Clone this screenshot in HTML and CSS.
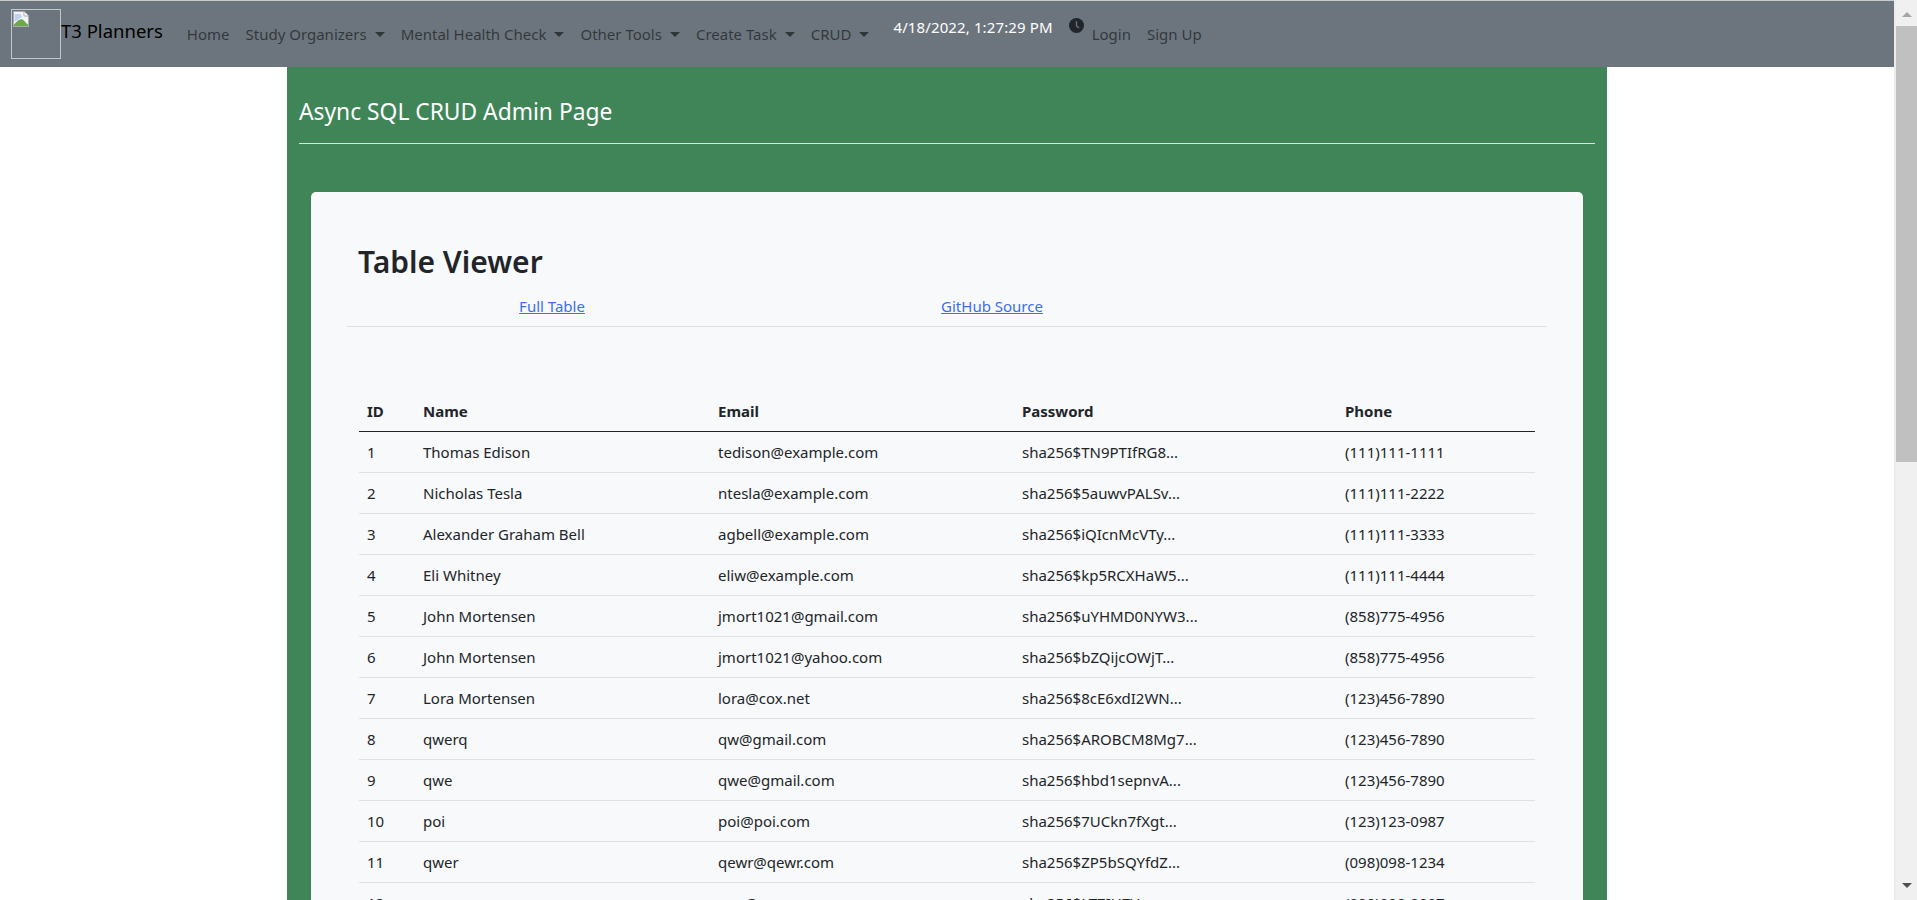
FILE: index.html
```html
<!DOCTYPE html>
<html lang="en">
<head>
<meta charset="utf-8">
<title>Async SQL CRUD Admin Page</title>
<link rel="stylesheet" href="styles.css">
</head>
<body>
<nav class="navbar">
  <a class="brand" href="#">
    <span class="broken-img">
      <svg width="16" height="16" viewBox="0 0 16 16"><path d="M0.5 0.5H11L15.5 5V15.5H0.5Z" fill="#f1f4f9" stroke="#a9adb0"/><path d="M11 0.5V5H15.5" fill="#fff" stroke="#a9adb0"/><path d="M1.5 3H7.5L9 6L6 8L1.5 11Z" fill="#bdd2f0"/><path d="M1 15V13.5C4 10 7 7.5 9.5 8.5C11.5 9.5 12.5 12 15 13.5V15Z" fill="#6fa84a"/></svg>
    </span>
    <span class="brand-name">T3 Planners</span>
  </a>
  <ul class="nav-list main-links">
    <li><a class="nav-link" href="#">Home</a></li>
    <li><a class="nav-link caret" href="#">Study Organizers</a></li>
    <li><a class="nav-link caret" href="#">Mental Health Check</a></li>
    <li><a class="nav-link caret" href="#">Other Tools</a></li>
    <li><a class="nav-link caret" href="#">Create Task</a></li>
    <li><a class="nav-link caret" href="#">CRUD</a></li>
  </ul>
  <span class="clock-text">4/18/2022, 1:27:29 PM</span>
  <svg class="clock-icon" width="15" height="15" viewBox="0 0 16 16"><circle cx="8" cy="8" r="8" fill="#212529"/><path d="M8 3.5V8.5L10.8 10.5" fill="none" stroke="#6c757d" stroke-width="1.4"/></svg>
  <ul class="nav-list user-links">
    <li><a class="nav-link" href="#">Login</a></li>
    <li><a class="nav-link" href="#">Sign Up</a></li>
  </ul>
</nav>
<main class="page">
  <h4 class="page-title">Async SQL CRUD Admin Page</h4>
  <hr class="page-rule">
  <section class="card">
    <h2 class="card-title">Table Viewer</h2>
    <div class="tabs">
      <a class="tab" href="#">Full Table</a>
      <a class="tab" href="#">GitHub Source</a>
    </div>
    <table class="data">
      <colgroup><col class="c-id"><col class="c-name"><col class="c-email"><col class="c-pass"><col class="c-phone"></colgroup>
      <thead><tr><th>ID</th><th>Name</th><th>Email</th><th>Password</th><th>Phone</th></tr></thead>
      <tbody>
        <tr><td>1</td><td>Thomas Edison</td><td>tedison@example.com</td><td>sha256$TN9PTIfRG8...</td><td>(111)111-1111</td></tr>
        <tr><td>2</td><td>Nicholas Tesla</td><td>ntesla@example.com</td><td>sha256$5auwvPALSv...</td><td>(111)111-2222</td></tr>
        <tr><td>3</td><td>Alexander Graham Bell</td><td>agbell@example.com</td><td>sha256$iQIcnMcVTy...</td><td>(111)111-3333</td></tr>
        <tr><td>4</td><td>Eli Whitney</td><td>eliw@example.com</td><td>sha256$kp5RCXHaW5...</td><td>(111)111-4444</td></tr>
        <tr><td>5</td><td>John Mortensen</td><td>jmort1021@gmail.com</td><td>sha256$uYHMD0NYW3...</td><td>(858)775-4956</td></tr>
        <tr><td>6</td><td>John Mortensen</td><td>jmort1021@yahoo.com</td><td>sha256$bZQijcOWjT...</td><td>(858)775-4956</td></tr>
        <tr><td>7</td><td>Lora Mortensen</td><td>lora@cox.net</td><td>sha256$8cE6xdI2WN...</td><td>(123)456-7890</td></tr>
        <tr><td>8</td><td>qwerq</td><td>qw@gmail.com</td><td>sha256$AROBCM8Mg7...</td><td>(123)456-7890</td></tr>
        <tr><td>9</td><td>qwe</td><td>qwe@gmail.com</td><td>sha256$hbd1sepnvA...</td><td>(123)456-7890</td></tr>
        <tr><td>10</td><td>poi</td><td>poi@poi.com</td><td>sha256$7UCkn7fXgt...</td><td>(123)123-0987</td></tr>
        <tr><td>11</td><td>qwer</td><td>qewr@qewr.com</td><td>sha256$ZP5bSQYfdZ...</td><td>(098)098-1234</td></tr>
        <tr><td>12</td><td>wer</td><td>wer@wer.com</td><td>sha256$LTZIUZV...</td><td>(000)000-0007</td></tr>
      </tbody>
    </table>
  </section>
</main>
<aside class="scrollbar" aria-hidden="true">
  <span class="sb-button"><span class="sb-up"></span></span>
  <span class="sb-track"><span class="sb-thumb"></span></span>
  <span class="sb-button"><span class="sb-down"></span></span>
</aside>
</body>
</html>
```
FILE: styles.css
```css
* { box-sizing: border-box; }
body {
  margin: 0;
  padding-right: 23px;
  background: #fff;
  color: #212529;
  font-family: "Noto Sans", "Open Sans", sans-serif;
  font-size: 15px;
  line-height: 24px;
}
.navbar {
  display: flex;
  align-items: flex-start;
  height: 67px;
  background: #6c757d;
  border-top: 1px solid #c9cbcd;
  padding-left: 11px;
}
.brand { display: flex; align-items: flex-start; color: #000; text-decoration: none; margin-top: 8px; }
.broken-img { display: block; width: 50px; height: 50px; border: 1px solid #c4c7ca; padding: 1px; line-height: 0; }
.brand-name { font-size: 18.5px; line-height: 27px; margin-top: 8px; white-space: nowrap; }
.nav-list { display: flex; list-style: none; margin: 21px 0 0; padding: 0; }
.nav-link { display: block; padding: 0 8px; color: rgba(0,0,0,.55); text-decoration: none; white-space: nowrap; }
.caret::after {
  content: "";
  display: inline-block;
  margin-left: 8px;
  vertical-align: 3px;
  border-top: 5px solid;
  border-left: 5px solid transparent;
  border-right: 5px solid transparent;
}
.main-links { margin-left: 16px; }
.clock-text { color: #fff; margin: 14px 0 0 16px; white-space: nowrap; letter-spacing: .12px; }
.clock-icon { margin: 17px 0 0 16px; flex: none; }
.user-links { margin-left: 0; }
.page {
  width: 1320px;
  min-height: 1683px;
  margin: 0 auto;
  background: #408558;
  padding: 0 12px;
  overflow: hidden;
}
.page-title { margin: 28px 0 0; font-size: 22.8px; line-height: 34px; font-weight: 400; color: #fff; }
.page-rule { margin: 14px 0 48px; border: 0; border-top: 1px solid #d9e6dd; }
.card {
  margin: 0 12px;
  background: #f8f9fa;
  border-radius: 5px;
  padding: 48px 36px 24px;
}
.card-title { margin: 0 0 0 11px; font-size: 30px; line-height: 44px; font-weight: 600; }
.tabs {
  display: flex;
  gap: 30px;
  height: 43px;
  border-bottom: 1px solid #dee2e6;
  padding-top: 10px;
}
.tab { width: 410px; text-align: center; color: #3a6ff0; text-decoration: underline; }
.data {
  width: 1176px;
  margin: 64px 0 0 12px;
  border-collapse: collapse;
  table-layout: fixed;
}
.c-id { width: 56px; }
.c-name { width: 295px; }
.c-email { width: 304px; }
.c-pass { width: 323px; }
.c-phone { width: 198px; }
.data th, .data td { padding: 8px; text-align: left; border-bottom: 1px solid #dee2e6; white-space: nowrap; }
.data th { font-weight: 700; border-bottom-color: #212529; }
.scrollbar {
  position: fixed;
  top: 0;
  right: 0;
  bottom: 0;
  width: 23px;
  display: flex;
  flex-direction: column;
  background: #f0f0f0;
  border-left: 2px solid #ececec;
}
.sb-button { flex: none; height: 26px; display: flex; align-items: center; justify-content: center; }
.sb-track { flex: 1; display: block; }
.sb-thumb { display: block; height: 436px; background: #c0c0c0; }
.sb-up { border-bottom: 5px solid #a6a6a6; border-left: 5px solid transparent; border-right: 5px solid transparent; margin-top: 2px; }
.sb-down { border-top: 5px solid #505050; border-left: 5px solid transparent; border-right: 5px solid transparent; margin-top: -3px; }
```
